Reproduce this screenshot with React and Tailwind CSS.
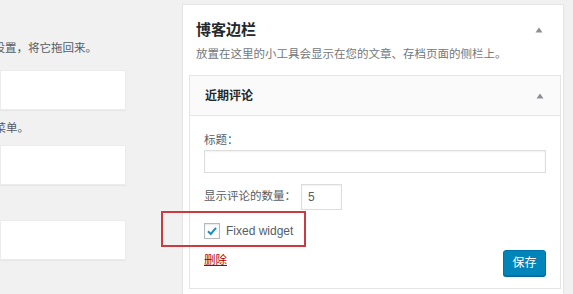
const font = { fontFamily: '"Liberation Sans", "Noto Sans CJK SC", sans-serif' };

function Arrow() {
  return (
    <svg width="8" height="6" viewBox="0 0 8 6" className="shrink-0">
      <path d="M4 0.5 L7.5 5.5 L0.5 5.5 Z" fill="#8c8f94" />
    </svg>
  );
}

function LeftBox() {
  return <div className="h-[40px] w-[126px] bg-white border border-[#ececec] shadow-[0_1px_1px_rgba(0,0,0,0.04)]" />;
}

export default function App() {
  return (
    <div
      className="relative flex w-[573px] h-[294px] overflow-hidden bg-[#f1f1f1] text-[#555d66]"
      style={font}
    >
      {/* Left: available widgets column */}
      <div className="flex flex-col w-[126px] shrink-0 pt-[41px] text-[11.5px] leading-[14px]">
        <p className="ml-[-18px] whitespace-nowrap">其设置，将它拖回来。</p>
        <div className="mt-[15px]"><LeftBox /></div>
        <p className="ml-[-17px] mt-[11px] whitespace-nowrap">的菜单。</p>
        <div className="mt-[10px]"><LeftBox /></div>
        <div className="mt-[35px]"><LeftBox /></div>
      </div>

      {/* Right: sidebar panel */}
      <div className="ml-[56px] mt-[4px] w-[382px] h-[300px] shrink-0 bg-white border border-[#e5e5e5] shadow-[0_1px_1px_rgba(0,0,0,0.04)]">
        <div className="flex items-center justify-between pl-[13px] pr-[20px] pt-[15px]">
          <h2 className="text-[15px] leading-[20px] font-bold text-[#23282d]">博客边栏</h2>
          <Arrow />
        </div>
        <p className="pl-[13px] mt-[7px] text-[11.5px] leading-[14px] text-[#72777c]">
          放置在这里的小工具会显示在您的文章、存档页面的侧栏上。
        </p>

        <div className="ml-[6px] mt-[14px] w-[372px] border border-[#e5e5e5] bg-white">
          <div className="flex items-center justify-between h-[40px] pl-[15px] pr-[16px] bg-[#fafafa] border-b border-[#e5e5e5]">
            <h3 className="text-[12px] font-bold text-[#23282d]">近期评论</h3>
            <Arrow />
          </div>

          <div className="px-[14px] pt-[17px] pb-[12px] text-[11.5px] text-[#555d66]">
            <label className="block leading-[14px]">标题：</label>
            <div className="mt-[3px] h-[23px] w-[342px] border border-[#dddddd] bg-white shadow-[inset_0_1px_2px_rgba(0,0,0,0.06)]" />

            <div className="mt-[11px] flex items-center">
              <span className="w-[97px]">显示评论的数量：</span>
              <div className="flex items-center h-[26px] w-[41px] pl-[6px] border border-[#dddddd] bg-white text-[12px] shadow-[inset_0_1px_2px_rgba(0,0,0,0.06)]">
                5
              </div>
            </div>

            <div className="mt-[12px] flex items-center gap-[6px]">
              <span className="flex items-center justify-center w-[16px] h-[16px] border border-[#b4b9be] bg-white shadow-[inset_0_1px_2px_rgba(0,0,0,0.1)]">
                <svg width="12" height="12" viewBox="0 0 12 12">
                  <path d="M2 6.2 L4.8 9 L10 2.8" fill="none" stroke="#1e8cbe" strokeWidth="2" />
                </svg>
              </span>
              <span className="text-[12px] text-[#555d66]">Fixed widget</span>
            </div>

            <div className="mt-[10px] flex items-center justify-between">
              <a className="text-[#a00] underline text-[11.5px] mt-[-4px]">删除</a>
              <button className="h-[26px] w-[43px] rounded-[3px] bg-[#0085ba] border border-[#0073aa] text-white text-[12px] shadow-[0_1px_0_#006799]">
                保存
              </button>
            </div>
          </div>
        </div>
      </div>

      {/* Highlight box over the checkbox row */}
      <div className="absolute left-[161px] top-[211px] w-[145px] h-[36px] border-2 border-[#c93b40]" />
    </div>
  );
}
